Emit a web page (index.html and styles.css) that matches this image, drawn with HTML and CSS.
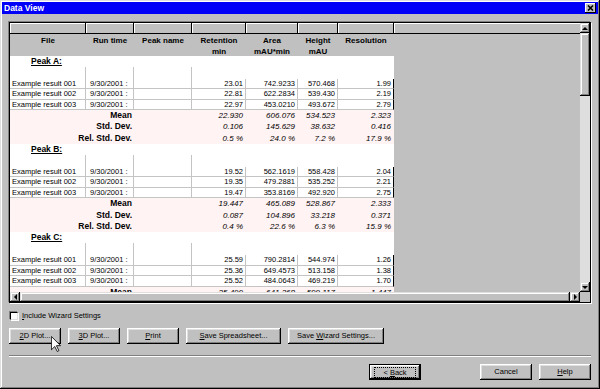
FILE: index.html
```html
<!DOCTYPE html>
<html lang="en">
<head>
  <meta charset="UTF-8" />
  <meta name="viewport" content="width=device-width, initial-scale=1.0"/>
  <title>Data View</title>
  <link rel="stylesheet" href="styles.css">
</head>
<body>
  <div class="window">
    <div class="titlebar">
      <span>Data View</span>
      <button class="close-btn" aria-label="Close">
        <svg width="7" height="6" viewBox="0 0 7 6"><path d="M1 0.5L6 5.5M6 0.5L1 5.5" stroke="#000" stroke-width="1.6"/></svg>
      </button>
    </div>

    <div class="dialog">
      <div class="grid-frame">
        <div class="grid-view">
          <div class="head-bar"><span></span><span></span><span></span><span></span><span></span><span></span><span></span><span></span></div>
          <div class="head-row">
            <span>File</span><span>Run time</span><span>Peak name</span>
            <span>Retention<br>min</span><span>Area<br>mAU*min</span><span>Height<br>mAU</span><span>Resolution</span>
          </div>

          <!-- Peak A -->
          <div class="row peak"><span class="peak-label">Peak A:</span></div>
          <div class="row blank"><span></span><span></span><span></span></div>
          <div class="row data"><span class="c-file">Example result 001</span><span class="c-run">9/30/2001 :</span><span></span><span class="num">23.01</span><span class="num">742.9233</span><span class="num">570.468</span><span class="num">1.99</span></div>
          <div class="row data"><span class="c-file">Example result 002</span><span class="c-run">9/30/2001 :</span><span></span><span class="num">22.81</span><span class="num">622.2834</span><span class="num">539.430</span><span class="num">2.19</span></div>
          <div class="row data"><span class="c-file">Example result 003</span><span class="c-run">9/30/2001 :</span><span></span><span class="num">22.97</span><span class="num">453.0210</span><span class="num">493.672</span><span class="num">2.79</span></div>
          <div class="row stats"><span class="stat-label">Mean</span><span></span><span class="num">22.930</span><span class="num">606.076</span><span class="num">534.523</span><span class="num">2.323</span></div>
          <div class="row stats"><span class="stat-label">Std. Dev.</span><span></span><span class="num">0.106</span><span class="num">145.629</span><span class="num">38.632</span><span class="num">0.416</span></div>
          <div class="row stats"><span class="stat-label">Rel. Std. Dev.</span><span></span><span class="num">0.5 %</span><span class="num">24.0 %</span><span class="num">7.2 %</span><span class="num">17.9 %</span></div>

          <!-- Peak B -->
          <div class="row peak"><span class="peak-label">Peak B:</span></div>
          <div class="row blank"><span></span><span></span><span></span></div>
          <div class="row data"><span class="c-file">Example result 001</span><span class="c-run">9/30/2001 :</span><span></span><span class="num">19.52</span><span class="num">562.1619</span><span class="num">558.428</span><span class="num">2.04</span></div>
          <div class="row data"><span class="c-file">Example result 002</span><span class="c-run">9/30/2001 :</span><span></span><span class="num">19.35</span><span class="num">479.2881</span><span class="num">535.252</span><span class="num">2.21</span></div>
          <div class="row data"><span class="c-file">Example result 003</span><span class="c-run">9/30/2001 :</span><span></span><span class="num">19.47</span><span class="num">353.8169</span><span class="num">492.920</span><span class="num">2.75</span></div>
          <div class="row stats"><span class="stat-label">Mean</span><span></span><span class="num">19.447</span><span class="num">465.089</span><span class="num">528.867</span><span class="num">2.333</span></div>
          <div class="row stats"><span class="stat-label">Std. Dev.</span><span></span><span class="num">0.087</span><span class="num">104.896</span><span class="num">33.218</span><span class="num">0.371</span></div>
          <div class="row stats"><span class="stat-label">Rel. Std. Dev.</span><span></span><span class="num">0.4 %</span><span class="num">22.6 %</span><span class="num">6.3 %</span><span class="num">15.9 %</span></div>

          <!-- Peak C -->
          <div class="row peak"><span class="peak-label">Peak C:</span></div>
          <div class="row blank"><span></span><span></span><span></span></div>
          <div class="row data"><span class="c-file">Example result 001</span><span class="c-run">9/30/2001 :</span><span></span><span class="num">25.59</span><span class="num">790.2814</span><span class="num">544.974</span><span class="num">1.26</span></div>
          <div class="row data"><span class="c-file">Example result 002</span><span class="c-run">9/30/2001 :</span><span></span><span class="num">25.36</span><span class="num">649.4573</span><span class="num">513.158</span><span class="num">1.38</span></div>
          <div class="row data"><span class="c-file">Example result 003</span><span class="c-run">9/30/2001 :</span><span></span><span class="num">25.52</span><span class="num">484.0643</span><span class="num">469.219</span><span class="num">1.70</span></div>
          <div class="row stats"><span class="stat-label">Mean</span><span></span><span class="num">25.490</span><span class="num">641.268</span><span class="num">509.117</span><span class="num">1.447</span></div>
        </div>

        <div class="vscroll">
          <div class="sb-btn"><i class="arrow-up"></i></div>
          <div class="thumb vthumb"></div>
          <div class="track"></div>
          <div class="sb-btn"><i class="arrow-down"></i></div>
        </div>
        <div class="hscroll">
          <div class="sb-btn"><i class="arrow-left"></i></div>
          <div class="thumb hthumb"></div>
          <div class="sb-btn"><i class="arrow-right"></i></div>
        </div>
        <div class="corner"></div>
      </div>

      <label class="check">
        <span class="check-box"></span>
        <span><u>I</u>nclude Wizard Settings</span>
      </label>

      <div class="actions">
        <button class="btn btn-sm"><u>2</u>D Plot...</button>
        <button class="btn btn-sm"><u>3</u>D Plot...</button>
        <button class="btn btn-sm"><u>P</u>rint</button>
        <button class="btn btn-wide"><u>S</u>ave Spreadsheet...</button>
        <button class="btn btn-wider">Save <u>W</u>izard Settings...</button>
      </div>

      <div class="separator"></div>

      <div class="nav">
        <button class="btn btn-sm btn-default"><span class="focus">&lt; <u>B</u>ack</span></button>
        <button class="btn btn-sm">Cancel</button>
        <button class="btn btn-sm"><u>H</u>elp</button>
      </div>
    </div>

    <svg class="cursor" width="10" height="16" viewBox="0 0 12 19">
      <path d="M0.5 0.5V16.5L4.5 12.5L7.5 18.5L9.5 17.5L6.5 11.5H11.5Z" fill="#fff" stroke="#000" stroke-width="1"/>
    </svg>
  </div>
</body>
</html>
```

FILE: styles.css
```css
:root {
  --face: #c0c0c0;
  --shadow: #808080;
  --light: #dfdfdf;
  --title: #0000f8;
  --line: #c4c4c4;
  --stats: #fff3f3;
  --cols: 76px 48px 58px 54px 52px 40px 56px;
}
* {
  margin: 0;
  padding: 0;
  box-sizing: border-box;
}
body {
  font-family: "Liberation Sans", Arial, sans-serif;
  font-size: 7.5px;
  color: #000;
  background: var(--face);
}
.window {
  position: relative;
  width: 600px;
  height: 389px;
  padding: 2px;
  background: var(--face);
  box-shadow: inset -1px -1px #000, inset 1px 1px var(--light),
              inset -2px -2px var(--shadow), inset 2px 2px #fff;
}
.titlebar {
  display: flex;
  align-items: center;
  justify-content: space-between;
  height: 12px;
  padding: 0 2px 0 2px;
  background: var(--title);
  color: #fff;
  font-size: 8.5px;
  font-weight: bold;
}
.close-btn {
  display: flex;
  align-items: center;
  justify-content: center;
  width: 11px;
  height: 10px;
  border: none;
  background: var(--face);
  box-shadow: inset -1px -1px #000, inset 1px 1px #fff;
}
.dialog {
  padding: 0 7px;
}

/* data grid */
.grid-frame {
  display: grid;
  grid-template-columns: 1fr 10px;
  grid-template-rows: 269px 10px;
  margin-top: 8px;
  border: 1px solid #000;
  box-shadow: -1px -1px 0 var(--shadow), 1px 1px 0 #fff;
}
.grid-view {
  overflow: hidden;
  background: var(--face);
}
.head-bar {
  display: grid;
  grid-template-columns: var(--cols) 1fr;
  height: 11px;
  border-bottom: 1px solid #000;
  box-shadow: inset 0 1px #fff;
}
.head-bar span {
  border-right: 1px solid #000;
  box-shadow: inset 1px 1px #fff;
}
.head-bar span:last-child {
  border-right: none;
}
.head-row {
  display: grid;
  grid-template-columns: var(--cols);
  width: 384px;
  height: 21.5px;
  padding-top: 1px;
  font-size: 8px;
  font-weight: bold;
  line-height: 11px;
  text-align: center;
}
.row {
  display: grid;
  grid-template-columns: var(--cols);
  width: 384px;
  background: #fff;
  line-height: 10px;
  white-space: nowrap;
}
.row.peak {
  height: 11px;
  font-size: 8.5px;
  font-weight: bold;
  line-height: 11px;
}
.peak-label {
  grid-column: 1 / -1;
  padding-left: 21px;
  text-decoration: underline;
}
.row.blank {
  height: 12px;
}
.row.blank span {
  border-right: 1px solid var(--line);
}
.row.data {
  height: 10.5px;
}
.row.data span {
  overflow: hidden;
  border-right: 1px solid var(--line);
  border-bottom: 1px solid var(--line);
}
.row.data span:last-child {
  border-right-color: #000;
}
.row.stats {
  height: 11.33px;
  background: var(--stats);
  line-height: 11px;
}
.stat-label {
  grid-column: span 2;
  padding-right: 2px;
  text-align: right;
  font-size: 8.5px;
  font-weight: bold;
}
.c-file {
  padding-left: 2px;
}
.c-run {
  padding-left: 4px;
}
.num {
  padding-right: 2px;
  text-align: right;
}
.stats .num {
  padding-right: 3px;
  font-size: 8px;
  font-style: italic;
}

/* scrollbars */
.vscroll {
  display: flex;
  flex-direction: column;
}
.hscroll {
  display: flex;
}
.sb-btn,
.thumb {
  background: var(--face);
  box-shadow: inset -1px -1px #000, inset 1px 1px var(--light),
              inset -2px -2px var(--shadow), inset 2px 2px #fff;
}
.sb-btn {
  display: flex;
  align-items: center;
  justify-content: center;
  width: 10px;
  height: 10px;
  flex-shrink: 0;
}
.vthumb {
  height: 63px;
}
.hthumb {
  flex: 1;
}
.track {
  flex: 1;
  background: #dedede;
}
.corner {
  background: var(--face);
}
.arrow-up,
.arrow-down {
  border-left: 3px solid transparent;
  border-right: 3px solid transparent;
}
.arrow-up {
  border-bottom: 3px solid #000;
}
.arrow-down {
  border-top: 3px solid #000;
}
.arrow-left,
.arrow-right {
  border-top: 3px solid transparent;
  border-bottom: 3px solid transparent;
}
.arrow-left {
  border-right: 3px solid #000;
}
.arrow-right {
  border-left: 3px solid #000;
}

/* controls below the grid */
.check {
  display: flex;
  align-items: center;
  gap: 4px;
  height: 9px;
  margin: 8px 0 0 1px;
}
.check-box {
  width: 8px;
  height: 8px;
  background: #fff;
  border: 1px solid #000;
  border-right-color: var(--light);
  border-bottom-color: var(--light);
  box-shadow: -1px -1px 0 var(--shadow), 1px 1px 0 #fff;
}
.actions {
  display: flex;
  gap: 7px;
  margin-top: 8px;
}
.btn {
  height: 16px;
  border: none;
  background: var(--face);
  font: inherit;
  line-height: 14px;
  color: #000;
  text-align: center;
  white-space: nowrap;
  box-shadow: inset -1px -1px #000, inset 1px 1px #fff,
              inset -2px -2px var(--shadow), inset 2px 2px var(--light);
}
.btn-sm {
  width: 52px;
}
.btn-wide {
  width: 95px;
}
.btn-wider {
  width: 96px;
}
.separator {
  height: 2px;
  margin-top: 11px;
  border-top: 1px solid var(--shadow);
  border-bottom: 1px solid #fff;
}
.nav {
  display: flex;
  justify-content: flex-end;
  gap: 7px;
  margin-top: 7px;
}
.btn-default {
  margin-right: 52px;
  border: 1px solid #000;
}
.focus {
  display: block;
  width: 42px;
  height: 11px;
  margin: 0 auto;
  line-height: 9px;
  border: 1px dotted #000;
  text-align: center;
}
.cursor {
  position: absolute;
  left: 51px;
  top: 336px;
}
```
